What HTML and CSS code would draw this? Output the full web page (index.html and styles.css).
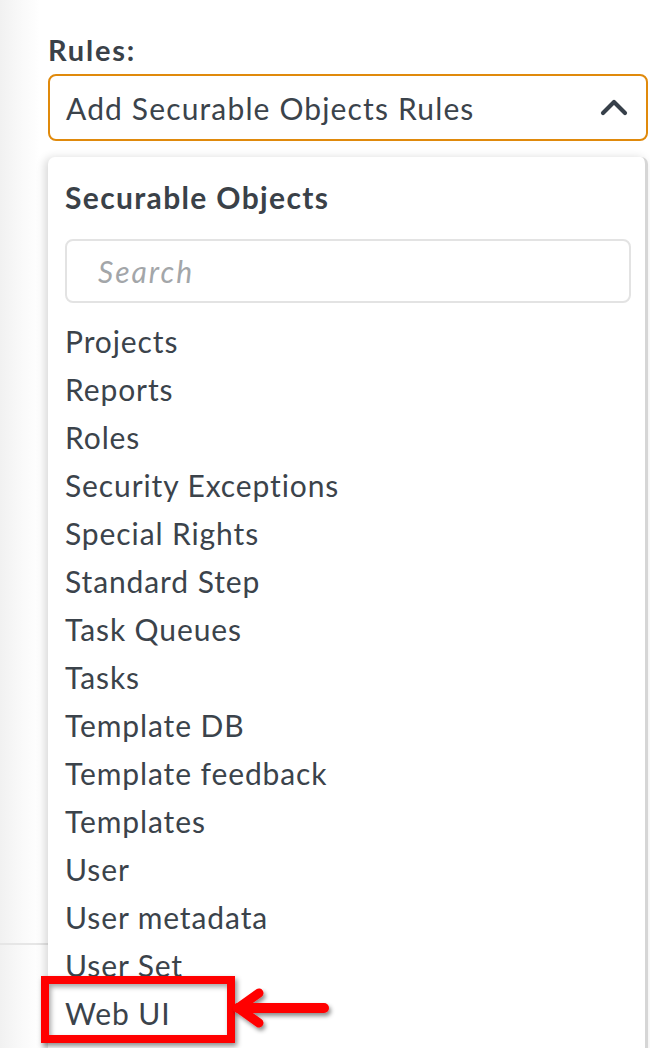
FILE: index.html
```html
<!DOCTYPE html>
<html>
<head>
<meta charset="utf-8">
<link rel="stylesheet" href="styles.css">
</head>
<body>
<div class="page">
  <div class="field">
    <div class="label">Rules:</div>
    <div class="select">
      <span class="select-text">Add Securable Objects Rules</span>
      <svg class="chevron" width="28" height="18" viewBox="0 0 28 18"><path d="M3 15 L14 4 L25 15" fill="none" stroke="#37404a" stroke-width="4.2" stroke-linecap="round" stroke-linejoin="round"/></svg>
    </div>
  </div>
  <div class="under-line"></div>

  <div class="menu">
    <div class="menu-title">Securable Objects</div>
    <div class="search"><span class="placeholder">Search</span></div>
    <ul class="items">
      <li>Projects</li>
      <li>Reports</li>
      <li>Roles</li>
      <li>Security Exceptions</li>
      <li>Special Rights</li>
      <li>Standard Step</li>
      <li>Task Queues</li>
      <li>Tasks</li>
      <li>Template DB</li>
      <li>Template feedback</li>
      <li>Templates</li>
      <li>User</li>
      <li>User metadata</li>
      <li>User Set</li>
      <li>Web UI</li>
    </ul>
  </div>

  <div class="highlight"></div>
  <svg class="arrow" width="110" height="50" viewBox="0 0 110 50">
    <defs>
      <filter id="sh" x="-20%" y="-40%" width="150%" height="190%">
        <feDropShadow dx="2" dy="3" stdDeviation="2.2" flood-color="#000" flood-opacity="0.45"/>
      </filter>
    </defs>
    <g filter="url(#sh)" fill="none" stroke="#ff0000" stroke-linecap="round" stroke-linejoin="round">
      <path d="M10 20 L96 20" stroke-width="10"/>
      <path d="M31 5 L10 20 L31 35" stroke-width="9"/>
    </g>
  </svg>
</div>
</body>
</html>
```
FILE: styles.css
```css
html, body {
  margin: 0;
  padding: 0;
}
body {
  width: 650px;
  height: 1048px;
  overflow: hidden;
  background: linear-gradient(to right, #f1f1f1 0px, #f8f8f8 18px, #ffffff 40px);
  font-family: Lato, "Open Sans", sans-serif;
  color: #3b434b;
}
.page {
  position: relative;
  height: 1048px;
  padding: 34px 2px 0 48px;
  box-sizing: border-box;
}
.label {
  font-weight: 700;
  font-size: 29px;
  line-height: 32px;
  color: #3a4148;
  letter-spacing: 1.8px;
}
.select {
  margin-top: 8px;
  height: 67px;
  box-sizing: border-box;
  border: 2px solid #e08a0c;
  border-radius: 8px;
  display: flex;
  align-items: center;
  justify-content: space-between;
  padding: 0 18px 0 16px;
  background: #fff;
}
.select-text {
  font-size: 30px;
  letter-spacing: 1.15px;
  color: #3b434b;
}
.chevron {
  display: block;
  margin-top: -2px;
}
.under-line {
  margin-top: 802px;
  margin-left: -48px;
  height: 2px;
  background: #e6e6e6;
}
.menu {
  position: absolute;
  left: 48px;
  top: 157px;
  width: 600px;
  height: 920px;
  box-sizing: border-box;
  background: #fff;
  border-radius: 7px;
  border-right: 3px solid #d6d6d6;
  box-shadow: -3px 1px 10px rgba(0, 0, 0, 0.16);
  padding: 20px 14px 0 17px;
}
.menu-title {
  font-weight: 700;
  font-size: 30px;
  line-height: 40px;
  letter-spacing: 1.35px;
  color: #3a4148;
}
.search {
  margin-top: 22px;
  height: 64px;
  box-sizing: border-box;
  border: 2px solid #e3e3e3;
  border-radius: 8px;
  display: flex;
  align-items: center;
  padding-left: 31px;
}
.placeholder {
  font-size: 30px;
  font-style: italic;
  letter-spacing: 2px;
  color: #a3a6a9;
}
.items {
  list-style: none;
  margin: 14px 0 0 0;
  padding: 0;
}
.items li {
  font-size: 30px;
  line-height: 48px;
  height: 48px;
  letter-spacing: 0.9px;
  color: #3b434b;
}
.highlight {
  position: absolute;
  left: 41px;
  top: 976px;
  width: 194px;
  height: 67px;
  box-sizing: border-box;
  border: 8px solid #ff0000;
  box-shadow: 2px 3px 5px rgba(0, 0, 0, 0.45), inset 2px 3px 5px rgba(0, 0, 0, 0.35);
}
.arrow {
  position: absolute;
  left: 228px;
  top: 988px;
}
```
